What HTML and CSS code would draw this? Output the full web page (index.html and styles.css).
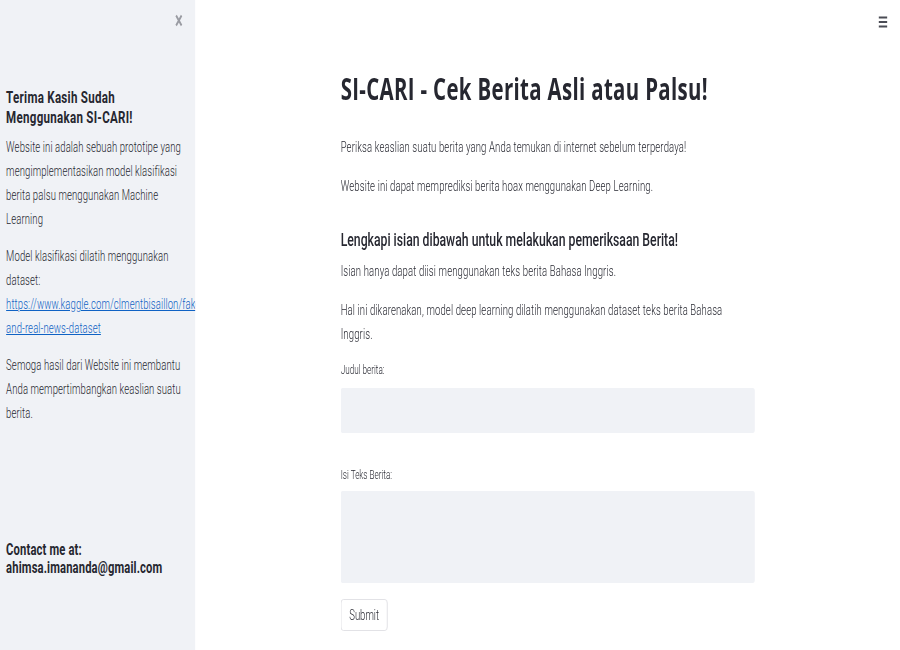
FILE: index.html
```html
<!DOCTYPE html>
<html lang="id">
<head>
<meta charset="utf-8">
<title>SI-CARI</title>
<link rel="stylesheet" href="styles.css">
</head>
<body>
<div class="app">
  <aside class="sidebar">
    <div class="side-top">
      <svg class="close" width="12" height="13" viewBox="0 0 12 13"><path d="M2 1.5 L10 11.5 M10 1.5 L2 11.5" stroke="#9a9ca3" stroke-width="2.6" stroke-linecap="butt" fill="none"/></svg>
    </div>
    <h2 class="side-title">Terima Kasih Sudah<br>Menggunakan SI-CARI!</h2>
    <p class="side-p">Website ini adalah sebuah prototipe yang<br>mengimplementasikan model klasifikasi<br>berita palsu menggunakan Machine<br>Learning</p>
    <p class="side-p">Model klasifikasi dilatih menggunakan<br>dataset:<br><a class="side-link" href="#">https://www.kaggle.com/clmentbisaillon/fake-<br>and-real-news-dataset</a></p>
    <p class="side-p">Semoga hasil dari Website ini membantu<br>Anda mempertimbangkan keaslian suatu<br>berita.</p>
    <div class="contact">Contact me at:<br>ahimsa.imananda@gmail.com</div>
  </aside>
  <main class="main">
    <div class="topbar">
      <svg class="menu" width="13" height="12" viewBox="0 0 13 12"><path d="M0 1.5 H13 M0 6 H13 M0 10.5 H13" stroke="#4a4c55" stroke-width="1.8" fill="none"/></svg>
    </div>
    <div class="content">
      <h1 class="title">SI-CARI - Cek Berita Asli atau Palsu!</h1>
      <p class="text">Periksa keaslian suatu berita yang Anda temukan di internet sebelum terperdaya!</p>
      <p class="text">Website ini dapat memprediksi berita hoax menggunakan Deep Learning.</p>
      <h3 class="subtitle">Lengkapi isian dibawah untuk melakukan pemeriksaan Berita!</h3>
      <p class="text">Isian hanya dapat diisi menggunakan teks berita Bahasa Inggris.</p>
      <p class="text">Hal ini dikarenakan, model deep learning dilatih menggunakan dataset teks berita Bahasa<br>Inggris.</p>
      <label class="label first">Judul berita:</label>
      <div class="input"></div>
      <label class="label second">Isi Teks Berita:</label>
      <div class="textarea"></div>
      <button class="btn" type="button">Submit</button>
    </div>
  </main>
</div>
</body>
</html>
```
FILE: styles.css
```css
html, body {
  margin: 0;
  padding: 0;
  width: 900px;
  height: 650px;
  overflow: hidden;
  background: #ffffff;
}
body {
  font-family: Roboto, "Noto Sans", sans-serif;
  color: #262730;
}
.app {
  display: flex;
  width: 1324px;
  height: 650px;
  transform: scaleX(0.68);
  transform-origin: 0 0;
}
.sidebar {
  width: 287px;
  flex: none;
  background: #f0f2f6;
  padding: 0 0 0 9px;
  box-sizing: border-box;
  overflow: hidden;
  white-space: nowrap;
}
.side-top {
  height: 40px;
  display: flex;
  align-items: center;
  justify-content: flex-end;
  padding-right: 18px;
}
.close { display: block; }
.side-title {
  margin: 47px 0 0 0;
  font-size: 17px;
  line-height: 20px;
  font-weight: 700;
  letter-spacing: 0.4px;
}
.side-p {
  margin: 8px 0 13px 0;
  font-size: 14px;
  line-height: 24px;
  font-weight: 300;
  letter-spacing: 0.15px;
}
.side-p + .side-p { margin-top: 0; }
.side-link {
  color: #0f62c4;
  text-decoration: underline;
}
.contact {
  margin-top: 116px;
  font-size: 16.5px;
  line-height: 18px;
  font-weight: 700;
  letter-spacing: 0.2px;
}
.main {
  flex: 1;
  display: flex;
  flex-direction: column;
}
.topbar {
  height: 44px;
  display: flex;
  align-items: center;
  justify-content: flex-end;
  padding-right: 19px;
}
.menu { display: block; }
.content {
  width: 609px;
  margin: 0 auto;
  display: flex;
  flex-direction: column;
  align-items: flex-start;
}
.title {
  margin: 27px 0 28px 0;
  font-family: "Open Sans", Roboto, sans-serif;
  font-size: 30px;
  line-height: 36px;
  font-weight: 700;
  letter-spacing: 0.5px;
  white-space: nowrap;
}
.text {
  margin: 0 0 15px 0;
  font-size: 14px;
  line-height: 24px;
  font-weight: 300;
  letter-spacing: 0.2px;
}
.subtitle {
  margin: 13px 0 5px 0;
  font-size: 18px;
  line-height: 28px;
  font-weight: 500;
}
.label {
  font-size: 12px;
  line-height: 16px;
  font-weight: 300;
}
.label.first { margin-top: 1px; }
.label.second { margin-top: 34px; }
.input {
  margin-top: 10px;
  width: 609px;
  height: 45px;
  background: #f0f2f6;
  border-radius: 3px;
}
.textarea {
  margin-top: 8px;
  width: 609px;
  height: 92px;
  background: #f0f2f6;
  border-radius: 3px;
}
.btn {
  margin-top: 16px;
  width: 69px;
  height: 32px;
  background: #ffffff;
  border: 1px solid #dcdde1;
  border-radius: 4px;
  font-family: Roboto, "Noto Sans", sans-serif;
  font-size: 14px;
  font-weight: 300;
  color: #262730;
  padding: 0;
}
```
